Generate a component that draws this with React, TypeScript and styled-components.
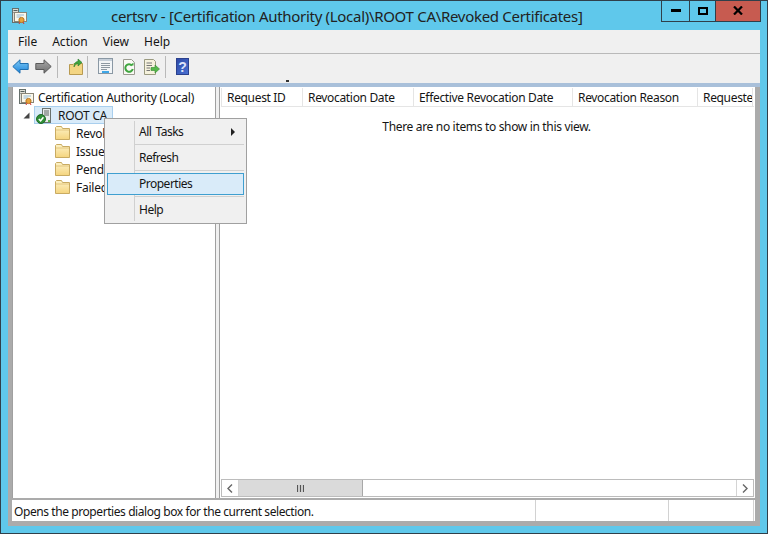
import React from "react";
import styled, { createGlobalStyle } from "styled-components";

const FONT = `"Noto Sans", "Open Sans", "Liberation Sans", sans-serif`;

const Global = createGlobalStyle`
  html, body { margin: 0; padding: 0; background: #5fc8eb; }
  * { box-sizing: border-box; }
`;

const Win = styled.div`
  position: relative;
  width: 768px;
  height: 534px;
  overflow: hidden;
  background: #5fc8eb;
  border: 1px solid #2f3f4a;
  display: flex;
  flex-direction: column;
  font-family: ${FONT};
  font-size: 12px;
  letter-spacing: -0.25px;
  color: #151515;
`;

const TitleBar = styled.div`
  height: 29px;
  flex: none;
  display: flex;
  position: relative;
  padding-left: 10px;
`;

const AppIconBox = styled.div`
  width: 16px;
  padding-top: 7px;
`;

const Title = styled.div`
  position: absolute;
  left: 110px;
  top: 4px;
  font-size: 15px;
  line-height: 22px;
  letter-spacing: -0.3px;
  color: #222;
  white-space: nowrap;
`;

const Caption = styled.div`
  margin-left: auto;
  margin-right: 6px;
  margin-top: -1px;
  height: 22px;
  display: flex;
  border: 1px solid #2f3f4a;
  border-top: none;
`;

const CapBtn = styled.div<{ $w: number; $red?: boolean }>`
  width: ${(p) => p.$w}px;
  display: flex;
  align-items: center;
  justify-content: center;
  background: ${(p) => (p.$red ? "#c75b50" : "transparent")};
  border-left: 1px solid #2f3f4a;
  &:first-child { border-left: none; }
`;

const Client = styled.div`
  margin: 0 7px 0 7px;
  height: 496px;
  display: flex;
  flex-direction: column;
  background: #ababab;
`;

const MenuBar = styled.div`
  height: 24px;
  flex: none;
  background: #f0f0f0;
  border-bottom: 1px solid #b9b9b9;
  display: flex;
  align-items: center;
  padding: 0 0 0 2px;
  letter-spacing: 0;
`;

const MenuLabel = styled.div`
  padding: 0 8px;
  margin-right: -1px;
  line-height: 22px;
`;

const Toolbar = styled.div`
  height: 29px;
  flex: none;
  background: #f0f0f0;
  display: flex;
  align-items: center;
  padding: 0 0 4px 1px;
`;

const ToolBtn = styled.div<{ $inset?: number }>`
  width: ${(p) => 23 + (p.$inset ?? 0)}px;
  height: 22px;
  padding-left: ${(p) => p.$inset ?? 0}px;
  display: flex;
  align-items: center;
  justify-content: center;
`;

const ToolSep = styled.div<{ $l: number; $r: number }>`
  width: 1px;
  height: 22px;
  margin: 0 ${(p) => p.$r}px 0 ${(p) => p.$l}px;
  background: #b9b9b9;
`;

const BlueStrip = styled.div`
  height: 4px;
  flex: none;
  background: #a9c0da;
`;

const Panes = styled.div`
  height: 412px;
  flex: none;
  display: flex;
  padding: 0 5px 1px 4px;
`;

const TreePane = styled.div`
  width: 204px;
  background: #fff;
  border: 1px solid #a0a0a0;
  border-bottom: none;
  border-top: none;
  padding-top: 1px;
`;

const Splitter = styled.div`
  width: 3px;
  flex: none;
  background: #f0f0f0;
`;

const TreeRow = styled.div<{ $indent: number }>`
  height: 18px;
  display: flex;
  align-items: center;
  padding-left: ${(p) => p.$indent}px;
  white-space: nowrap;
`;

const Expander = styled.svg`
  width: 7px;
  height: 7px;
  margin-right: 4px;
  flex: none;
`;

const Selected = styled.div`
  display: flex;
  align-items: center;
  height: 18px;
  width: 79px;
  background: #d9ebf9;
  border: 1px solid #a9cfee;
  padding-left: 1px;
`;

const TreeLabel = styled.span<{ $gap: number }>`
  margin-left: ${(p) => p.$gap}px;
`;

const ListPane = styled.div`
  flex: 1;
  min-width: 0;
  background: #fff;
  border-left: 1px solid #a0a0a0;
  padding: 1px 1px 0 1px;
  display: flex;
  flex-direction: column;
`;

const Header = styled.div`
  height: 19px;
  flex: none;
  display: flex;
  overflow: hidden;
  border-bottom: 1px solid #e5e5e5;
  border-left: 1px solid #e5e5e5;
  letter-spacing: -0.33px;
`;

const HeadCell = styled.div<{ $w: number }>`
  width: ${(p) => p.$w}px;
  flex: none;
  padding-left: 5px;
  line-height: 19px;
  white-space: nowrap;
  overflow: hidden;
  border-right: 1px solid #e5e5e5;
`;

const Empty = styled.div`
  flex: 1;
  text-align: center;
  padding-top: 11px;
  padding-right: 2px;
  line-height: 18px;
  letter-spacing: -0.33px;
`;

const HScroll = styled.div`
  height: 18px;
  flex: none;
  margin-bottom: 1px;
  display: flex;
  border: 1px solid #bcbcbc;
`;

const ScrollBtn = styled.div<{ $left?: boolean }>`
  width: 17px;
  flex: none;
  display: flex;
  align-items: center;
  justify-content: center;
  ${(p) => (p.$left ? "border-right" : "border-left")}: 1px solid #d4d4d4;
`;

const Thumb = styled.div`
  width: 124px;
  flex: none;
  background: #dadada;
  border-right: 1px solid #a8a8a8;
  display: flex;
  align-items: center;
  justify-content: center;
`;

const Track = styled.div`
  flex: 1;
`;

const StatusBar = styled.div`
  height: 21px;
  flex: none;
  margin: 1px 5px 0 4px;
  padding-right: 1px;
  background: #fff;
  display: flex;
  align-items: center;
  letter-spacing: -0.42px;
`;

const StatusCell = styled.div<{ $w?: number }>`
  ${(p) => (p.$w ? `width: ${p.$w}px; flex: none;` : "flex: 1;")}
  height: 100%;
  padding-left: 2px;
  line-height: 23px;
  border-right: 1px solid #d2d2d2;
`;

const Menu = styled.div`
  position: absolute;
  left: 103px;
  top: 117px;
  width: 143px;
  height: 106px;
  background: #f0f0f0;
  border: 1px solid #a0a0a0;
  padding: 2px;
  display: flex;
  flex-direction: column;
  letter-spacing: -0.5px;
  word-spacing: 1.5px;
`;

const MenuRail = styled.div`
  position: absolute;
  left: 29px;
  top: 2px;
  bottom: 2px;
  width: 1px;
  background: #d0d0d0;
`;

const MenuItem = styled.div<{ $active?: boolean }>`
  position: relative;
  height: 22px;
  margin-bottom: 4px;
  line-height: 20px;
  padding: 0 8px 0 31px;
  display: flex;
  align-items: center;
  justify-content: space-between;
  background: ${(p) => (p.$active ? "#d9ebf9" : "transparent")};
  border: 1px solid ${(p) => (p.$active ? "#3f9fd0" : "transparent")};
  &:last-child { margin-bottom: 0; }
`;

const MenuSep = styled.div<{ $top: number }>`
  position: absolute;
  left: 30px;
  right: 2px;
  top: ${(p) => p.$top}px;
  height: 1px;
  background: #d0d0d0;
`;

const Speck = styled.div`
  position: absolute;
  left: 285px;
  top: 79px;
  width: 3px;
  height: 2px;
  background: #333;
`;

const Folder = () => (
  <svg width="15" height="14" viewBox="0 0 15 14">
    <defs>
      <linearGradient id="folderFill" x1="0" y1="0" x2="0" y2="1">
        <stop offset="0" stopColor="#fdf3c8" />
        <stop offset="1" stopColor="#f5d47e" />
      </linearGradient>
    </defs>
    <path d="M0.5 13.5V1.5L1.5 0.5H6.5L7.5 2.5H14.5V13.5Z" fill="url(#folderFill)" stroke="#c9ab62" />
    <path d="M1 4H14" stroke="#e3c67e" />
  </svg>
);

const CertIcon = () => (
  <svg width="16" height="16" viewBox="0 0 16 16">
    <rect x="1.5" y="0.5" width="6" height="14" fill="#dcdcd4" stroke="#66706c" />
    <rect x="2.5" y="2" width="4" height="1" fill="#55605c" />
    <rect x="2.5" y="4" width="4" height="1" fill="#55605c" />
    <rect x="3.5" y="4.5" width="12" height="9" fill="#fbf8ea" stroke="#8a8678" />
    <path d="M5.5 7H13M5.5 9H10" stroke="#8fb8d8" />
    <circle cx="10.5" cy="12" r="2.6" fill="#e6a33a" stroke="#b8761e" />
    <path d="M9 14l-1 2M12 14l1 2" stroke="#c33" />
  </svg>
);

const ServerIcon = () => (
  <svg width="17" height="17" viewBox="0 0 17 17">
    <rect x="6.5" y="1.5" width="8" height="14" fill="#e9ecec" stroke="#6a726e" />
    <path d="M8 4H13M8 6H13M8 8H13" stroke="#5a625e" />
    <rect x="12" y="13" width="2" height="2" fill="#58b04c" />
    <circle cx="5" cy="12" r="4.5" fill="#2f8f36" stroke="#1f6a28" />
    <path d="M2.8 12L4.6 13.8L7.4 10.2" stroke="#fff" strokeWidth="1.5" fill="none" />
  </svg>
);

const Arrow = ({ color, light, dark, flip, id }: { color: string; light: string; dark: string; flip?: boolean; id: string }) => (
  <svg width="17" height="15" viewBox="0 0 17 15" style={flip ? { transform: "scaleX(-1)" } : undefined}>
    <defs>
      <linearGradient id={id} x1="0" y1="0" x2="0" y2="1">
        <stop offset="0" stopColor={light} />
        <stop offset="1" stopColor={color} />
      </linearGradient>
    </defs>
    <path d="M0.8 7.5L8 0.8V4.5H16.2V10.5H8V14.2Z" fill={`url(#${id})`} stroke={dark} />
  </svg>
);

const UpFolder = () => (
  <svg width="16" height="18" viewBox="0 0 16 18">
    <path d="M1.5 6.5H5L6 5.5H14.5V16.5H1.5Z" fill="#f3d583" stroke="#b89a50" />
    <path d="M6 9C6 5 8 3.5 10 3.5V1L14 4.5L10 8V5.5C8.5 5.5 7 7 6 9Z" fill="#3fa53f" stroke="#2a7a2a" strokeWidth="0.6" />
  </svg>
);

const PropsIcon = () => (
  <svg width="16" height="17" viewBox="0 0 16 17">
    <rect x="0.5" y="0.5" width="14" height="15" fill="#f2f5f7" stroke="#8a98a4" />
    <rect x="1" y="1" width="13" height="2" fill="#c4ced8" />
    <path d="M3 5.5H12M3 7.5H12M3 9.5H12M3 11.5H9" stroke="#8c98a2" />
    <rect x="4" y="13" width="7" height="2" fill="#3fa6e6" />
  </svg>
);

const RefreshIcon = () => (
  <svg width="14" height="16" viewBox="0 0 14 16">
    <path d="M1.5 0.5H9.5L12.5 3.5V15.5H1.5Z" fill="#fafaf5" stroke="#9a9a90" />
    <path d="M10 6.5A3.8 3.8 0 1 0 10.8 10" fill="none" stroke="#3fa53f" strokeWidth="2" />
    <path d="M8 6.5H11.5V3.5Z" fill="#3fa53f" />
  </svg>
);

const ExportIcon = () => (
  <svg width="16" height="16" viewBox="0 0 16 16">
    <path d="M0.5 0.5H9.5L11.5 2.5V15.5H0.5Z" fill="#f6f2dd" stroke="#9a9a80" />
    <path d="M2.5 4H8M2.5 6.5H8M2.5 9H6M2.5 11.5H6" stroke="#777" />
    <path d="M7 8.5H11V6L15.5 10L11 14V11.5H7Z" fill="#56b84c" stroke="#348a2e" strokeWidth="0.6" />
  </svg>
);

const HelpIcon = () => (
  <svg width="13" height="17" viewBox="0 0 13 17">
    <defs>
      <linearGradient id="helpFill" x1="0" y1="0" x2="1" y2="1">
        <stop offset="0" stopColor="#2d48a4" />
        <stop offset="1" stopColor="#4a72d4" />
      </linearGradient>
    </defs>
    <rect x="0.5" y="0.5" width="12" height="16" fill="url(#helpFill)" stroke="#2b418e" />
    <text x="6.5" y="13.5" fontSize="14" fontWeight="700" textAnchor="middle" fill="#dde4fa" fontFamily="Liberation Sans">?</text>
  </svg>
);

const Grip = () => (
  <svg width="7" height="7" viewBox="0 0 7 7">
    <path d="M0.5 0V7M3.5 0V7M6.5 0V7" stroke="#555" strokeWidth="1.2" />
  </svg>
);

const Chevron = ({ flip }: { flip?: boolean }) => (
  <svg width="6" height="9" viewBox="0 0 6 9" style={flip ? { transform: "scaleX(-1)" } : undefined}>
    <path d="M1 0.5L5 4.5L1 8.5" fill="none" stroke="#666" strokeWidth="1.4" />
  </svg>
);

const columns: [string, number][] = [
  ["Request ID", 81],
  ["Revocation Date", 111],
  ["Effective Revocation Date", 159],
  ["Revocation Reason", 125],
  ["Requester Name", 55],
];

export default function App() {
  return (
    <>
      <Global />
      <Win>
        <TitleBar>
          <AppIconBox>
            <CertIcon />
          </AppIconBox>
          <Title>certsrv - [Certification Authority (Local)\ROOT CA\Revoked Certificates]</Title>
          <Caption>
            <CapBtn $w={27}>
              <svg width="10" height="3" viewBox="0 0 10 3"><rect width="10" height="3" fill="#000" /></svg>
            </CapBtn>
            <CapBtn $w={26}>
              <svg width="10" height="8" viewBox="0 0 10 8"><rect x="1" y="1" width="8" height="6" fill="none" stroke="#000" strokeWidth="2" /></svg>
            </CapBtn>
            <CapBtn $w={45} $red>
              <svg width="10" height="9" viewBox="0 0 10 9"><path d="M1 0.5L9 8.5M9 0.5L1 8.5" stroke="#000" strokeWidth="2.2" /></svg>
            </CapBtn>
          </Caption>
        </TitleBar>
        <Client>
          <MenuBar>
            <MenuLabel>File</MenuLabel>
            <MenuLabel>Action</MenuLabel>
            <MenuLabel>View</MenuLabel>
            <MenuLabel>Help</MenuLabel>
          </MenuBar>
          <Toolbar>
            <ToolBtn><Arrow id="backFill" color="#1f86dc" light="#7cc8f4" dark="#1f6fb0" /></ToolBtn>
            <ToolBtn><Arrow id="fwdFill" color="#6e6e6e" light="#a8a8a8" dark="#5a5a5a" flip /></ToolBtn>
            <ToolSep $l={2} $r={3} />
            <ToolBtn $inset={3}><UpFolder /></ToolBtn>
            <ToolSep $l={0} $r={6} />
            <ToolBtn><PropsIcon /></ToolBtn>
            <ToolBtn><RefreshIcon /></ToolBtn>
            <ToolBtn><ExportIcon /></ToolBtn>
            <ToolSep $l={2} $r={5} />
            <ToolBtn><HelpIcon /></ToolBtn>
          </Toolbar>
          <BlueStrip />
          <Panes>
            <TreePane>
              <TreeRow $indent={5}>
                <CertIcon />
                <TreeLabel $gap={4}>Certification Authority (Local)</TreeLabel>
              </TreeRow>
              <TreeRow $indent={10}>
                <Expander viewBox="0 0 7 7"><path d="M6.5 0.5V6.5H0.5Z" fill="#444" /></Expander>
                <Selected>
                  <ServerIcon />
                  <TreeLabel $gap={5}>ROOT CA</TreeLabel>
                </Selected>
              </TreeRow>
              {["Revoked Certificates", "Issued Certificates", "Pending Requests", "Failed Requests"].map((t) => (
                <TreeRow $indent={42} key={t}>
                  <Folder />
                  <TreeLabel $gap={6}>{t}</TreeLabel>
                </TreeRow>
              ))}
            </TreePane>
            <Splitter />
            <ListPane>
              <Header>
                {columns.map(([t, w]) => (
                  <HeadCell $w={w} key={t}>{t}</HeadCell>
                ))}
              </Header>
              <Empty>There are no items to show in this view.</Empty>
              <HScroll>
                <ScrollBtn $left><Chevron flip /></ScrollBtn>
                <Thumb><Grip /></Thumb>
                <Track />
                <ScrollBtn><Chevron /></ScrollBtn>
              </HScroll>
            </ListPane>
          </Panes>
          <StatusBar>
            <StatusCell>Opens the properties dialog box for the current selection.</StatusCell>
            <StatusCell $w={133} />
            <StatusCell $w={85} />
          </StatusBar>
        </Client>
        <Speck />
        <Menu>
          <MenuRail />
          <MenuItem>
            All Tasks
            <svg width="4" height="8" viewBox="0 0 4 8"><path d="M0 0L4 4L0 8Z" fill="#222" /></svg>
          </MenuItem>
          <MenuSep $top={25} />
          <MenuItem>Refresh</MenuItem>
          <MenuSep $top={51} />
          <MenuItem $active>Properties</MenuItem>
          <MenuSep $top={77} />
          <MenuItem>Help</MenuItem>
        </Menu>
      </Win>
    </>
  );
}
